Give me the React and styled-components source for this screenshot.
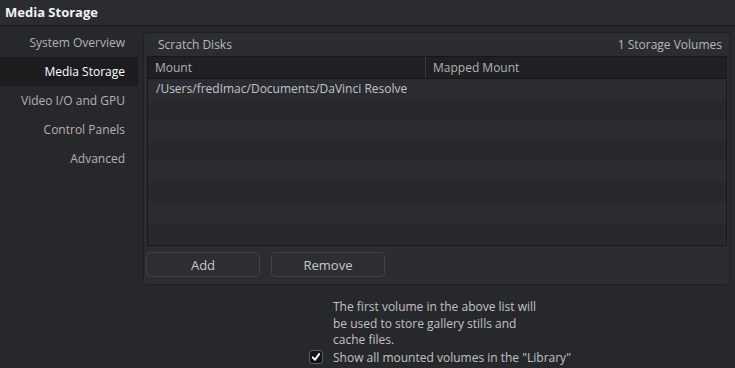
import React from 'react';
import styled, { createGlobalStyle } from 'styled-components';

const Global = createGlobalStyle`
  html, body {
    margin: 0;
    padding: 0;
    background: #27282c;
  }
  body {
    font-family: "Open Sans", "Liberation Sans", sans-serif;
    -webkit-font-smoothing: antialiased;
  }
`;

const sections = ['System Overview', 'Media Storage', 'Video I/O and GPU', 'Control Panels', 'Advanced'];
const rows = ['/Users/fredImac/Documents/DaVinci Resolve', '', '', '', '', '', '', ''];

const App = () => {
  return (
    <Window>
      <Global />
      <TitleBar>Media Storage</TitleBar>
      <Main>
        <Sidebar>
          {sections.map((s) => (
            <NavItem key={s} $active={s === 'Media Storage'}>{s}</NavItem>
          ))}
        </Sidebar>
        <Content>
          <Panel>
            <PanelHeader>
              <span>Scratch Disks</span>
              <span>1 Storage Volumes</span>
            </PanelHeader>
            <Table>
              <HeadRow>
                <HeadCell $w={277}>Mount</HeadCell>
                <HeadCell>Mapped Mount</HeadCell>
              </HeadRow>
              {rows.map((r, i) => (
                <Row key={i} $odd={i % 2 === 1}>{r}</Row>
              ))}
            </Table>
            <Buttons>
              <Button>Add</Button>
              <Button>Remove</Button>
            </Buttons>
          </Panel>
          <Note>
            <NoteText>
              The first volume in the above list will<br />
              be used to store gallery stills and<br />
              cache files.
            </NoteText>
            <CheckRow>
              <Check>
                <svg width="14" height="14" viewBox="0 0 14 14">
                  <path d="M3.2 7.4 L5.8 10.2 L10.8 3.4" fill="none" stroke="#fff" strokeWidth="2.2" strokeLinecap="round" strokeLinejoin="round" />
                </svg>
              </Check>
              <span>Show all mounted volumes in the "Library"</span>
            </CheckRow>
          </Note>
        </Content>
      </Main>
    </Window>
  );
};

export default App;

const Window = styled.div`
  width: 735px;
  height: 368px;
  overflow: hidden;
  background: #27282c;
  display: flex;
  flex-direction: column;
`;

const TitleBar = styled.div`
  height: 25px;
  line-height: 24px;
  padding-left: 5px;
  font-size: 13px;
  font-weight: 700;
  color: #f2f2f2;
  background: #2b2c30;
  border-bottom: 1px solid #17181a;
`;

const Main = styled.div`
  display: flex;
  flex: 1;
`;

const Sidebar = styled.div`
  width: 138px;
  padding-top: 2px;
  display: flex;
  flex-direction: column;
`;

const NavItem = styled.div`
  height: 29px;
  line-height: 29px;
  text-align: right;
  padding-right: 13px;
  font-size: 12px;
  color: ${(p) => (p.$active ? '#ffffff' : '#b3b3b3')};
  background: ${(p) => (p.$active ? '#1c1c1f' : 'transparent')};
`;

const Content = styled.div`
  flex: 1;
  padding: 6px 5px 0 5px;
  display: flex;
  flex-direction: column;
`;

const Panel = styled.div`
  background: #2c2d32;
  border: 1px solid #1f2024;
  border-radius: 4px 3px 3px 3px;
  padding: 0 2px 7px 3px;
`;

const PanelHeader = styled.div`
  height: 23px;
  display: flex;
  justify-content: space-between;
  align-items: center;
  padding: 0 5px 0 11px;
  font-size: 12px;
  color: #b8b8b8;
`;

const Table = styled.div`
  height: 188px;
  border: 1px solid #18181b;
  background: #2a2b30;
  overflow: hidden;
`;

const HeadRow = styled.div`
  display: flex;
  height: 21px;
  background: #1f2023;
  border-bottom: 1px solid #17171a;
`;

const HeadCell = styled.div`
  ${(p) => (p.$w ? `width: ${p.$w}px;` : 'flex: 1;')}
  line-height: 21px;
  padding-left: 7px;
  box-sizing: border-box;
  font-size: 12px;
  color: #b3b3b3;
  & + & {
    border-left: 1px solid #3a3b40;
  }
`;

const Row = styled.div`
  height: 20.5px;
  line-height: 20px;
  padding-left: 8px;
  font-size: 12px;
  color: #c4c4c4;
  background: ${(p) => (p.$odd ? '#27282d' : '#2b2c31')};
`;

const Buttons = styled.div`
  display: flex;
  gap: 11px;
  margin-top: 6px;
  margin-left: -1px;
`;

const Button = styled.button`
  width: 114px;
  height: 25px;
  background: #2d2e33;
  border: 1px solid #404147;
  border-radius: 4px;
  font-family: inherit;
  font-size: 13px;
  color: #c9c9c9;
  padding: 0;
`;

const Note = styled.div`
  padding: 14px 0 0 166px;
  font-size: 12px;
  color: #c2c2c2;
`;

const NoteText = styled.div`
  padding-left: 24px;
  line-height: 16.5px;
`;

const CheckRow = styled.div`
  display: flex;
  align-items: center;
  gap: 10px;
  height: 17px;
`;

const Check = styled.div`
  width: 14px;
  height: 14px;
  box-sizing: border-box;
  border: 1px solid #5a5b60;
  border-radius: 3px;
  background: #141416;
  display: flex;
  align-items: center;
  justify-content: center;
  svg {
    display: block;
  }
`;
